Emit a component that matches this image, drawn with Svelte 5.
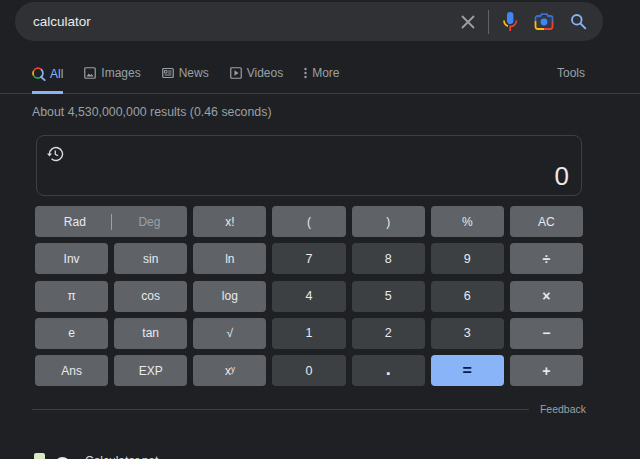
<script>
	const keys = [
		{ t: 'Rad', kind: 'toggle' }, { t: 'x!' }, { t: '(' }, { t: ')' }, { t: '%' }, { t: 'AC' },
		{ t: 'Inv' }, { t: 'sin' }, { t: 'ln' }, { t: '7', kind: 'num' }, { t: '8', kind: 'num' }, { t: '9', kind: 'num' }, { t: '÷', kind: 'op' },
		{ t: 'π' }, { t: 'cos' }, { t: 'log' }, { t: '4', kind: 'num' }, { t: '5', kind: 'num' }, { t: '6', kind: 'num' }, { t: '×', kind: 'op' },
		{ t: 'e' }, { t: 'tan' }, { t: '√' }, { t: '1', kind: 'num' }, { t: '2', kind: 'num' }, { t: '3', kind: 'num' }, { t: '−', kind: 'op' },
		{ t: 'Ans' }, { t: 'EXP' }, { t: 'xʸ' }, { t: '0', kind: 'num' }, { t: '.', kind: 'num dot' }, { t: '=', kind: 'eq' }, { t: '+', kind: 'op' }
	];

	const tabs = ['Images', 'News', 'Videos', 'More'];
</script>

<div class="page">
	<div class="searchbar">
		<span class="query">calculator</span>
		<svg class="clear" width="16" height="16" viewBox="0 0 16 16"><path d="M2 2l12 12M14 2L2 14" stroke="#9aa0a6" stroke-width="1.8" fill="none" /></svg>
		<span class="sep"></span>
		<svg class="mic" width="16" height="22" viewBox="0 0 16 22">
			<rect x="5" y="1" width="6.4" height="12" rx="3.2" fill="#4285f4" />
			<path d="M2 9.5a6 6 0 0 0 4 5.6" stroke="#fbbc04" stroke-width="1.7" fill="none" />
			<path d="M14.4 9.5a6 6 0 0 1-6.2 6V20" stroke="#ea4335" stroke-width="1.7" fill="none" />
		</svg>
		<svg class="lens" width="20" height="18" viewBox="0 0 20 18">
			<rect x="3" y="3.5" width="14" height="11" rx="1" fill="#2f3a4c" />
			<path d="M1.5 8V5a2 2 0 0 1 2-2h3l1-1.8H13l1 1.8h2.5a2 2 0 0 1 2 2v3" stroke="#3f6fc4" stroke-width="1.8" fill="none" />
			<path d="M1.5 8v5.5a2.5 2.5 0 0 0 2.5 2.5h6" stroke="#fbbc04" stroke-width="1.8" fill="none" />
			<path d="M10 16h6a2.5 2.5 0 0 0 2.5-2.5V8" stroke="#ea4335" stroke-width="1.8" fill="none" />
			<circle cx="10" cy="9" r="3.4" fill="#4285f4" />
		</svg>
		<svg class="search" width="17" height="17" viewBox="0 0 17 17"><circle cx="6.8" cy="6.8" r="4.8" stroke="#8ab4f8" stroke-width="1.8" fill="none" /><path d="M10.5 10.5l5.3 5.3" stroke="#8ab4f8" stroke-width="1.8" /></svg>
	</div>

	<nav class="tabs">
		<div class="tab active">
			<svg width="14" height="14" viewBox="0 0 14 14">
				<path d="M9.3 2.5A4.8 4.8 0 0 0 1.6 4" stroke="#ea4335" stroke-width="1.6" fill="none" />
				<path d="M1.6 4a4.8 4.8 0 0 0 0 4.5" stroke="#fbbc04" stroke-width="1.6" fill="none" />
				<path d="M1.6 8.5a4.8 4.8 0 0 0 7.4 1.5" stroke="#34a853" stroke-width="1.6" fill="none" />
				<path d="M9 2.3a4.8 4.8 0 0 1 0 7.7l4.3 3.7" stroke="#8ab4f8" stroke-width="1.7" fill="none" />
			</svg>
			All
		</div>
		{#each tabs as tab}
			<div class="tab">
				{#if tab === 'Images'}
					<svg width="12" height="12" viewBox="0 0 12 12"><rect x=".75" y=".75" width="10.5" height="10.5" rx="1" stroke="#9aa0a6" stroke-width="1.2" fill="none" /><path d="M2.5 9.5l2.2-3 1.6 1.8 1.3-1.3 2 2.5z" fill="#9aa0a6" /></svg>
				{:else if tab === 'News'}
					<svg width="12" height="12" viewBox="0 0 12 12"><rect x=".75" y="1.5" width="10.5" height="9" rx="1" stroke="#9aa0a6" stroke-width="1.2" fill="none" /><path d="M2.5 3.5h2.5v2.5H2.5zM6.2 4h3.3M6.2 6h3.3M2.5 8h7" stroke="#9aa0a6" fill="none" /></svg>
				{:else if tab === 'Videos'}
					<svg width="12" height="12" viewBox="0 0 12 12"><rect x=".75" y=".75" width="10.5" height="10.5" rx="1" stroke="#9aa0a6" stroke-width="1.2" fill="none" /><path d="M4.5 3.3l4 2.7-4 2.7z" fill="#9aa0a6" /></svg>
				{:else}
					<svg width="3" height="12" viewBox="0 0 3 12"><circle cx="1.5" cy="2" r="1.2" fill="#9aa0a6" /><circle cx="1.5" cy="6" r="1.2" fill="#9aa0a6" /><circle cx="1.5" cy="10" r="1.2" fill="#9aa0a6" /></svg>
				{/if}
				{tab}
			</div>
		{/each}
		<div class="tools">Tools</div>
	</nav>

	<p class="stats">About 4,530,000,000 results (0.46 seconds)</p>

	<div class="calc">
		<div class="display">
			<svg class="history" width="18" height="18" viewBox="0 0 18 18">
				<path d="M3.5 9a6.5 6.5 0 1 1 2 4.7" stroke="#dadce0" stroke-width="1.4" fill="none" />
				<path d="M1 8.5h5L3.5 11.5z" fill="#dadce0" />
				<path d="M9.3 5.5V9.3l2.8 1.5" stroke="#dadce0" stroke-width="1.3" fill="none" />
			</svg>
			<span class="value">0</span>
		</div>
		<div class="keys">
			{#each keys as key}
				{#if key.kind === 'toggle'}
					<div class="key wide">
						<span class="on">Rad</span>
						<i></i>
						<span class="off">Deg</span>
					</div>
				{:else}
					<div class="key {key.kind || ''}">{key.t}</div>
				{/if}
			{/each}
		</div>
	</div>

	<div class="feedback">
		<span class="rule"></span>
		<span>Feedback</span>
	</div>

	<div class="result">
		<span class="fav"></span>
		<span class="globe"></span>
		<span class="site">Calculator.net</span>
	</div>
</div>

<style>
	:global(body) {
		background: #202124;
		overflow: hidden;
	}

	.page {
		height: 459px;
		overflow: hidden;
		background: #1f2023;
		font-family: 'Liberation Sans', Arial, sans-serif;
		color: #bdc1c6;
		padding-top: 2px;
		box-sizing: border-box;
	}

	.searchbar {
		display: flex;
		align-items: center;
		width: 588px;
		height: 39px;
		margin-left: 15px;
		box-sizing: border-box;
		padding: 0 16px 0 18px;
		background: #303134;
		border-radius: 20px;
	}

	.query {
		flex: 1;
		font-size: 13.5px;
		color: #e8eaed;
	}

	.clear {
		margin-right: 12px;
	}

	.sep {
		width: 1px;
		height: 24px;
		background: #5f6368;
		margin-right: 13px;
	}

	.mic {
		margin-right: 16px;
	}

	.lens {
		margin-right: 16px;
	}

	.tabs {
		display: flex;
		align-items: center;
		gap: 21px;
		height: 53px;
		box-sizing: border-box;
		padding: 12px 55px 0 32px;
		border-bottom: 1px solid #3c4043;
		font-size: 12px;
		color: #9aa0a6;
	}

	.tab {
		display: flex;
		align-items: center;
		gap: 5px;
		height: 100%;
		box-sizing: border-box;
	}

	.tab.active {
		color: #8ab4f8;
		border-bottom: 3px solid #8ab4f8;
		margin-bottom: -1px;
		height: calc(100% + 1px);
		padding-top: 3px;
		gap: 4px;
	}

	.tools {
		margin-left: auto;
	}

	.stats {
		margin: 11px 0 0 32px;
		font-size: 12.35px;
		line-height: 15px;
		color: #9aa0a6;
	}

	.calc {
		margin: 15px 0 0 35px;
		width: 548px;
	}

	.display {
		display: flex;
		justify-content: space-between;
		height: 61px;
		margin-left: 1px;
		width: 546px;
		box-sizing: border-box;
		padding: 0 12px 0 9px;
		border: 1px solid #3c4043;
		border-radius: 8px;
	}

	.history {
		margin-top: 9px;
	}

	.value {
		align-self: flex-end;
		font-size: 26px;
		line-height: 29px;
		margin-bottom: 4px;
		color: #e8eaed;
	}

	.keys {
		display: grid;
		grid-template-columns: repeat(7, 1fr);
		grid-auto-rows: 31px;
		gap: 6.25px 6px;
		margin-top: 10px;
	}

	.key {
		display: flex;
		align-items: center;
		justify-content: center;
		background: #5f6368;
		border-radius: 4px;
		font-size: 12px;
		color: #e8eaed;
	}

	.key.wide {
		grid-column: span 2;
	}

	.key.wide span {
		flex: 1;
		text-align: center;
	}

	.key.wide .on {
		text-indent: 4px;
	}

	.key.wide i {
		width: 1px;
		height: 16px;
		background: #9aa0a6;
	}

	.key.wide .off {
		color: #9aa0a6;
	}

	.key.op {
		font-size: 14px;
		font-weight: bold;
	}

	.key.num {
		background: #3c4043;
		font-size: 12.5px;
	}

	.key.dot {
		font-size: 18px;
		font-weight: bold;
		padding-bottom: 2px;
	}

	.key.eq {
		background: #8ab4f8;
		color: #001d4d;
		font-size: 16px;
		font-weight: bold;
	}

	.feedback {
		display: flex;
		align-items: center;
		gap: 11px;
		margin: 17px 54px 0 32px;
		font-size: 10.5px;
		color: #9aa0a6;
	}

	.rule {
		flex: 1;
		height: 1px;
		background: #3c4043;
	}

	.result {
		display: flex;
		align-items: flex-start;
		margin: 38px 0 0 34px;
		font-size: 12px;
		color: #dadce0;
	}

	.fav {
		width: 11px;
		height: 14px;
		background: #d9e8c8;
		border-radius: 2px;
	}

	.globe {
		width: 15px;
		height: 14px;
		margin: 4px 0 0 10px;
		background: #e8eaed;
		border-radius: 50%;
	}

	.site {
		margin: 1px 0 0 15px;
	}
</style>
